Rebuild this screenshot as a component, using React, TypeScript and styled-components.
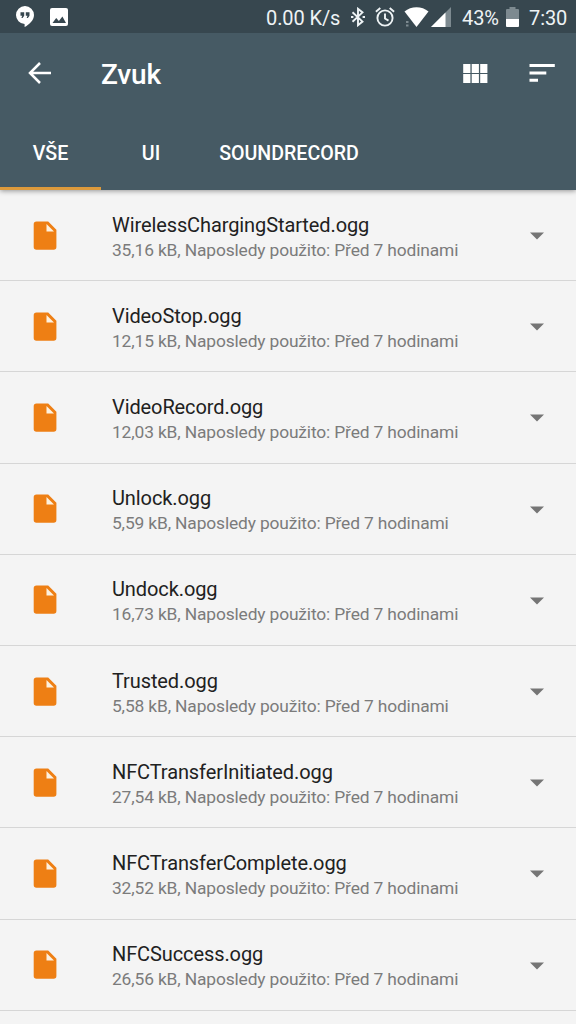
import React from "react";
import styled, { createGlobalStyle } from "styled-components";

const GlobalStyle = createGlobalStyle`
  * { box-sizing: border-box; }
  html, body { margin: 0; height: 1024px; overflow: hidden; background: #f4f4f4; }
  body { font-family: Roboto, "Liberation Sans", sans-serif; }
  svg { display: block; flex: none; }
`;

const Screen = styled.div`
  width: 576px;
  height: 1024px;
  overflow: hidden;
  background: #f4f4f4;
`;

const Header = styled.header`
  position: relative;
  height: 190px;
  background: #465a64;
  color: #fff;
  box-shadow: 0 1px 5px rgba(0, 0, 0, 0.4);
`;

const StatusBar = styled.div`
  display: flex;
  align-items: center;
  height: 33px;
  padding: 0 9px 0 15px;
  background: #37474f;
  color: #eef3f5;
  font-size: 20px;
  line-height: 33px;
`;

const StatusIcons = styled.div`
  display: flex;
  align-items: center;
  gap: 15px;
  margin-right: auto;
`;

const StatusText = styled.span<{ $width: number; $gap?: number }>`
  width: ${(p) => p.$width}px;
  margin-right: ${(p) => p.$gap ?? 0}px;
  padding-top: 3px;
  letter-spacing: -0.1px;
  white-space: nowrap;
`;

const StatusGlyph = styled.span<{ $gap: number }>`
  margin-right: ${(p) => p.$gap}px;
`;

const Toolbar = styled.div`
  display: flex;
  align-items: center;
  height: 80px;
  padding: 0 21px 0 27px;
`;

const Title = styled.h1`
  margin: 0 auto 0 49px;
  padding-top: 3px;
  font-size: 28px;
  font-weight: 500;
  line-height: 34px;
  letter-spacing: -0.2px;
`;

const Action = styled.button<{ $gap?: number }>`
  margin: 0 ${(p) => p.$gap ?? 0}px 0 0;
  padding: 0;
  border: 0;
  background: none;
  color: inherit;
`;

const Tabs = styled.nav`
  display: flex;
  height: 77px;
`;

const Tab = styled.div<{ $width: number; $active?: boolean }>`
  width: ${(p) => p.$width}px;
  padding-top: 28px;
  border-bottom: 3px solid ${(p) => (p.$active ? "#dd9a3c" : "transparent")};
  font-size: 19.6px;
  font-weight: 500;
  line-height: 25px;
  text-align: center;
`;

const List = styled.ul`
  margin: 0;
  padding: 0;
  list-style: none;
`;

const Row = styled.li`
  display: flex;
  align-items: center;
  height: 91.2px;
  padding: 0 30px 0 33px;
  border-bottom: 1.6px solid #d6d6d6;
`;

const Details = styled.div`
  flex: 1;
  margin-left: 55px;
  padding-top: 3px;
  white-space: nowrap;
`;

const Name = styled.div`
  color: #212121;
  font-size: 20px;
  line-height: 26px;
  letter-spacing: -0.1px;
`;

const Meta = styled.div`
  color: #7b7b7b;
  font-size: 17.4px;
  line-height: 24px;
  letter-spacing: -0.15px;
`;

const Caret = styled.span`
  padding-top: 2px;
`;

const HangoutsIcon = () => (
  <svg width="20" height="21" viewBox="0 0 20 21">
    <path fill="#fff" d="M10 0a9 9 0 0 0-9 9.100a9 9 0 0 0 8.600 9V21c4-2 9.400-6.500 9.400-12A9 9 0 0 0 10 0z" />
    <path fill="#37474f" d="M5.500 6.200h3.700v3.600L7.600 12H6.400l.8-2.200H5.500zM10.800 6.200h3.700v3.600L12.900 12h-1.200l.8-2.200h-1.700z" />
  </svg>
);

const PictureIcon = () => (
  <svg width="18" height="18" viewBox="0 0 18 18">
    <rect width="18" height="18" rx="2" fill="#fff" />
    <path fill="#37474f" d="M2.500 15l3.700-5 2.700 3 3.500-4.500L16 15z" />
  </svg>
);

const BluetoothIcon = () => (
  <svg width="14" height="20" viewBox="0 0 14 20" fill="none" stroke="#eef3f5" strokeWidth="1.900">
    <path d="M1.500 5.200L11.500 14.600L7 18.200V1.800L11.500 5.400L1.500 14.800" />
    <path d="M0 10h2.400M11.600 10H14" />
  </svg>
);

const AlarmIcon = () => (
  <svg width="20" height="20" viewBox="0 0 20 20" fill="none" stroke="#eef3f5" strokeWidth="1.900">
    <circle cx="10" cy="11" r="7.600" />
    <path d="M10 6.500V11.500l3.500 2.100M.9 4.800L5.300 1.100M19.100 4.800L14.700 1.100" />
  </svg>
);

const WifiIcon = () => (
  <svg width="25" height="20" viewBox="0 0 25 20">
    <path fill="#fff" d="M.5 4.500C7-1.200 18-1.200 24.500 4.500L12.500 20z" />
    <path fill="#7d8a90" d="M2 14h2.500v2H2zM2 17.500h2.500v2H2z" />
  </svg>
);

const SignalIcon = () => (
  <svg width="20" height="20" viewBox="0 0 20 20">
    <path fill="#7d8a90" d="M20 0v20H0z" />
    <path fill="#fff" d="M14.500 5.500V20H0z" />
  </svg>
);

const BatteryIcon = () => (
  <svg width="13" height="20" viewBox="0 0 13 20">
    <path fill="#7d8a90" d="M3.500 0h6v2H12a1 1 0 0 1 1 1v9H0V3a1 1 0 0 1 1-1h2.500z" />
    <path fill="#fff" d="M0 12h13v7a1 1 0 0 1-1 1H1a1 1 0 0 1-1-1z" />
  </svg>
);

const BackIcon = () => (
  <svg width="25" height="24" viewBox="0 0 25 24" fill="none" stroke="#fff" strokeWidth="2.500">
    <path d="M24 12H3M13 2L3 12l10 10" />
  </svg>
);

const GridIcon = () => (
  <svg width="25" height="19" viewBox="0 0 25 19" fill="#fff">
    <path d="M.2 0h7.200v8.900H.2zM8.700 0h7.200v8.900H8.700zM17.200 0h7.200v8.900h-7.200zM.2 10.100h7.200V19H.2zM8.700 10.100h7.200V19H8.700zM17.200 10.100h7.200V19h-7.200z" />
  </svg>
);

const SortIcon = () => (
  <svg width="26" height="18" viewBox="0 0 26 18" fill="#fff">
    <path d="M.5 0h25.300v3H.5zM.5 7.400h16.800v3H.5zM.5 14.700H9v3H.5z" />
  </svg>
);

const FileIcon = () => (
  <svg width="24" height="29" viewBox="0 0 24 29">
    <path fill="#ee7f14" d="M3.500.5H15.200L23.400 8.700V26a2.800 2.800 0 0 1-2.800 2.800H3.500A2.800 2.800 0 0 1 .7 26V3.300A2.800 2.800 0 0 1 3.500.5z" />
    <path fill="#fdf1df" d="M13.500 3v7.500H21z" />
  </svg>
);

const CaretIcon = () => (
  <svg width="18" height="8" viewBox="0 0 18 8">
    <path fill="#757575" d="M2 .5h14L9 7.500z" />
  </svg>
);

const files = [
  ["WirelessChargingStarted.ogg", "35,16 kB"],
  ["VideoStop.ogg", "12,15 kB"],
  ["VideoRecord.ogg", "12,03 kB"],
  ["Unlock.ogg", "5,59 kB"],
  ["Undock.ogg", "16,73 kB"],
  ["Trusted.ogg", "5,58 kB"],
  ["NFCTransferInitiated.ogg", "27,54 kB"],
  ["NFCTransferComplete.ogg", "32,52 kB"],
  ["NFCSuccess.ogg", "26,56 kB"],
];

export default function App() {
  return (
    <Screen>
      <GlobalStyle />
      <Header>
        <StatusBar>
          <StatusIcons>
            <HangoutsIcon />
            <PictureIcon />
          </StatusIcons>
          <StatusText $width={74} $gap={11}>0.00 K/s</StatusText>
          <StatusGlyph $gap={10}><BluetoothIcon /></StatusGlyph>
          <StatusGlyph $gap={9}><AlarmIcon /></StatusGlyph>
          <StatusGlyph $gap={2}><WifiIcon /></StatusGlyph>
          <StatusGlyph $gap={11}><SignalIcon /></StatusGlyph>
          <StatusText $width={37} $gap={7}>43%</StatusText>
          <StatusGlyph $gap={10}><BatteryIcon /></StatusGlyph>
          <StatusText $width={38}>7:30</StatusText>
        </StatusBar>
        <Toolbar>
          <Action aria-label="Zpět"><BackIcon /></Action>
          <Title>Zvuk</Title>
          <Action $gap={41} aria-label="Mřížka"><GridIcon /></Action>
          <Action aria-label="Seřadit"><SortIcon /></Action>
        </Toolbar>
        <Tabs>
          <Tab $width={101} $active>VŠE</Tab>
          <Tab $width={100}>UI</Tab>
          <Tab $width={176}>SOUNDRECORD</Tab>
        </Tabs>
      </Header>
      <List>
        {files.map(([name, size]) => (
          <Row key={name}>
            <FileIcon />
            <Details>
              <Name>{name}</Name>
              <Meta>{size}, Naposledy použito: Před 7 hodinami</Meta>
            </Details>
            <Caret><CaretIcon /></Caret>
          </Row>
        ))}
      </List>
    </Screen>
  );
}
